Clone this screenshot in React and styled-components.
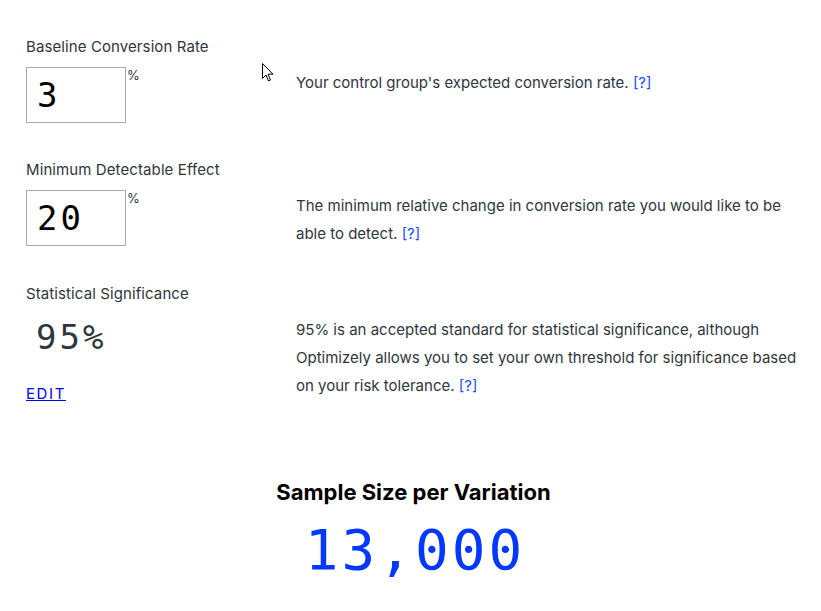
import React from "react";
import styled, { createGlobalStyle } from "styled-components";

const Global = createGlobalStyle`
  html, body { margin: 0; padding: 0; background: #fff; }
  body { font-family: "Inter", "Liberation Sans", sans-serif; color: #2f363d; }
`;

const Page = styled.div`
  position: relative;
  width: 821px;
  height: 611px;
  overflow: hidden;
  padding: 38px 20px 0 26px;
  box-sizing: border-box;
`;

const Row = styled.section`
  display: grid;
  grid-template-columns: 270px 505px;
  height: ${(p) => p.$h}px;
`;

const Left = styled.div`
  display: flex;
  flex-direction: column;
  align-items: flex-start;
`;

const Label = styled.div`
  font-size: 15px;
  line-height: 18px;
  letter-spacing: 0.1px;
  color: #2f363d;
`;

const InputWrap = styled.div`
  display: flex;
  align-items: flex-start;
  margin-top: 11px;
`;

const Input = styled.input`
  width: 100px;
  height: 56px;
  box-sizing: border-box;
  border: 1px solid #a9a9a9;
  padding: 0 0 0 10px;
  font-family: "DejaVu Sans Mono", "Liberation Mono", monospace;
  font-size: 34px;
  letter-spacing: 3px;
  color: #000;
  outline: none;
  background: #fff;
`;

const Pct = styled.span`
  font-size: 13px;
  color: #2f363d;
  margin-left: 1px;
`;

const Static = styled.div`
  font-family: "DejaVu Sans Mono", "Liberation Mono", monospace;
  font-size: 34px;
  letter-spacing: 3px;
  color: #2f363d;
  margin: 14px 0 0 10px;
  line-height: 40px;
`;

const Edit = styled.a`
  margin-top: 27px;
  font-size: 15px;
  letter-spacing: 1.6px;
  color: #0000ee;
  text-decoration: underline;
  cursor: pointer;
`;

const Desc = styled.p`
  margin: 0;
  padding-top: 31px;
  font-size: 15px;
  line-height: 28px;
  color: #2f363d;
`;

const Help = styled.a`
  color: #1a4dff;
  text-decoration: none;
`;

const Result = styled.div`
  display: flex;
  flex-direction: column;
  align-items: center;
  margin-top: 74px;
  width: 775px;
`;

const ResultTitle = styled.h2`
  margin: 0;
  font-size: 22px;
  font-weight: 700;
  color: #000;
`;

const ResultValue = styled.div`
  font-family: "DejaVu Sans Mono", "Liberation Mono", monospace;
  font-size: 56px;
  letter-spacing: 3px;
  line-height: 70px;
  color: #0038ff;
  margin-top: 10px;
  padding-left: 3px;
`;

const Cursor = styled.svg`
  position: absolute;
  left: 262px;
  top: 63px;
`;

export default function App() {
  return (
    <Page>
      <Global />
      <Row $h={123}>
        <Left>
          <Label>Baseline Conversion Rate</Label>
          <InputWrap>
            <Input defaultValue="3" />
            <Pct>%</Pct>
          </InputWrap>
        </Left>
        <Desc>
          Your control group's expected conversion rate. <Help>[?]</Help>
        </Desc>
      </Row>
      <Row $h={124}>
        <Left>
          <Label>Minimum Detectable Effect</Label>
          <InputWrap>
            <Input defaultValue="20" />
            <Pct>%</Pct>
          </InputWrap>
        </Left>
        <Desc>
          The minimum relative change in conversion rate you would like to be
          able to detect. <Help>[?]</Help>
        </Desc>
      </Row>
      <Row $h={120}>
        <Left>
          <Label>Statistical Significance</Label>
          <Static>95%</Static>
          <Edit>EDIT</Edit>
        </Left>
        <Desc>
          95% is an accepted standard for statistical significance, although
          Optimizely allows you to set your own threshold for significance based
          on your risk tolerance. <Help>[?]</Help>
        </Desc>
      </Row>
      <Result>
        <ResultTitle>Sample Size per Variation</ResultTitle>
        <ResultValue>13,000</ResultValue>
      </Result>
      <Cursor width="12" height="19" viewBox="0 0 12 19">
        <path
          d="M0.5 0.5 L0.5 15.5 L4 12 L6.5 18 L8.5 17 L6 11.2 L11 11.2 Z"
          fill="#fff"
          stroke="#000"
          strokeWidth="1"
        />
      </Cursor>
    </Page>
  );
}
